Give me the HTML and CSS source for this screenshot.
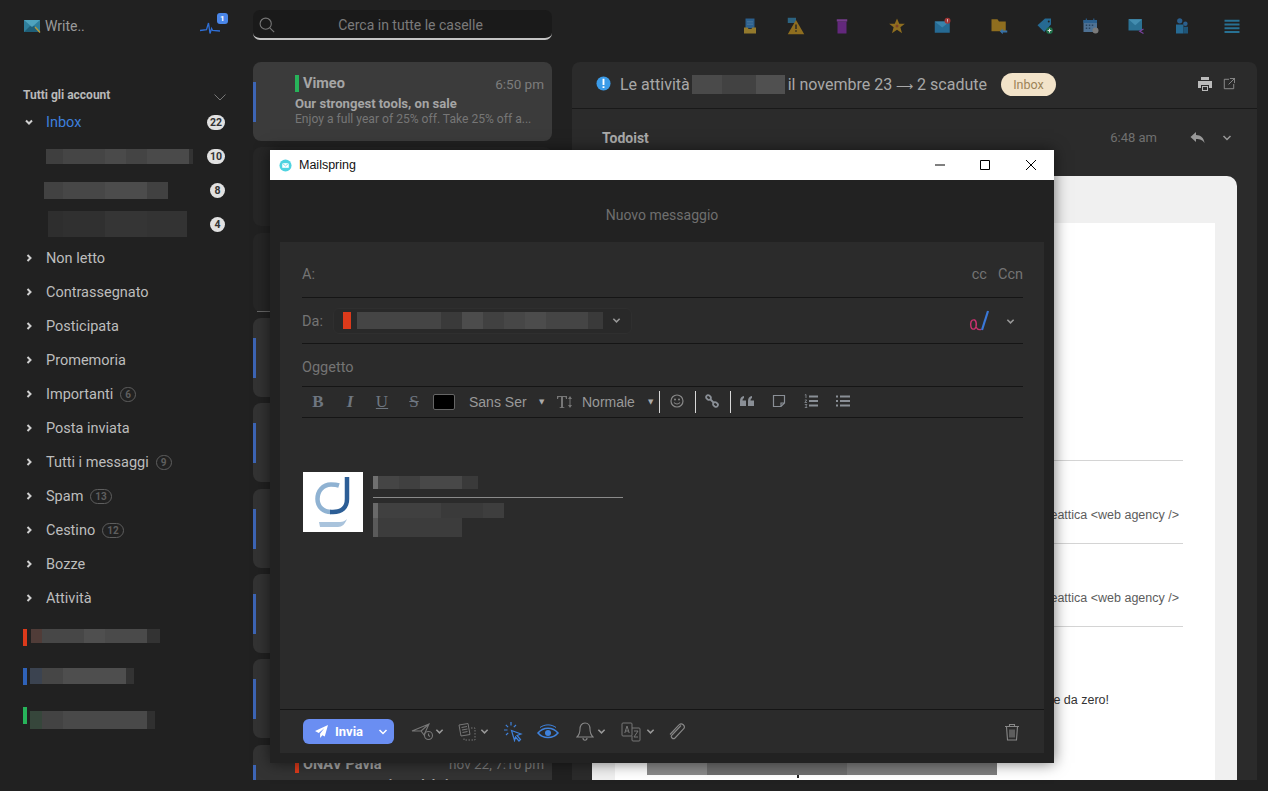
FILE: index.html
```html
<!DOCTYPE html>
<html lang="it">
<head>
<meta charset="utf-8">
<title>Mailspring</title>
<link rel="stylesheet" href="styles.css">
</head>
<body>
<div class="app">
  <aside class="sidebar">
    <div class="brand">
      <svg class="brand-ico" viewBox="0 0 17 14"><path fill="#2f7f9c" d="M0 1h16v12H0z"/><path fill="#4fa3bd" d="M0 1h16L8 8z"/><path fill="#1f5f78" d="M0 13l6-6 2 1 2-1 6 6z"/><path stroke="#b89a3a" stroke-width="1.4" d="M11 8l5 5.5"/></svg>
      <span class="brand-name">Write..</span>
      <span class="pulse">
        <svg viewBox="0 0 20 14" class="pulse-ico"><path fill="none" stroke="#2f6fd6" stroke-width="1.300" d="M0 8.500l6.500-.8L8.500 1l1.500 10.500 1.600-5 1 2L20 9"/></svg>
        <b class="pulse-badge">1</b>
      </span>
    </div>
    <div class="acc-head"><span>Tutti gli account</span><svg class="acc-chev" viewBox="0 0 12 7"><path fill="none" stroke="#777" d="M.5.5L6 6 11.5.5"/></svg></div>
    <ul class="nav">
      <li class="nav-item active"><svg class="chev" viewBox="0 0 10 10"><path d="M2 3.500l3 3 3-3"/></svg><span>Inbox</span><b class="count">22</b></li>
      <li class="nav-item sub"><i class="blur s1"></i><b class="count">10</b></li>
      <li class="nav-item sub"><i class="blur s2"></i><b class="count one">8</b></li>
      <li class="nav-item sub"><i class="blur s3"></i><b class="count one">4</b></li>
      <li class="nav-item"><svg class="chev" viewBox="0 0 10 10"><path d="M3.500 2l3 3-3 3"/></svg><span>Non letto</span></li>
      <li class="nav-item"><svg class="chev" viewBox="0 0 10 10"><path d="M3.500 2l3 3-3 3"/></svg><span>Contrassegnato</span></li>
      <li class="nav-item"><svg class="chev" viewBox="0 0 10 10"><path d="M3.500 2l3 3-3 3"/></svg><span>Posticipata</span></li>
      <li class="nav-item"><svg class="chev" viewBox="0 0 10 10"><path d="M3.500 2l3 3-3 3"/></svg><span>Promemoria</span></li>
      <li class="nav-item"><svg class="chev" viewBox="0 0 10 10"><path d="M3.500 2l3 3-3 3"/></svg><span>Importanti</span><em class="ghost">6</em></li>
      <li class="nav-item"><svg class="chev" viewBox="0 0 10 10"><path d="M3.500 2l3 3-3 3"/></svg><span>Posta inviata</span></li>
      <li class="nav-item"><svg class="chev" viewBox="0 0 10 10"><path d="M3.500 2l3 3-3 3"/></svg><span>Tutti i messaggi</span><em class="ghost">9</em></li>
      <li class="nav-item"><svg class="chev" viewBox="0 0 10 10"><path d="M3.500 2l3 3-3 3"/></svg><span>Spam</span><em class="ghost">13</em></li>
      <li class="nav-item"><svg class="chev" viewBox="0 0 10 10"><path d="M3.500 2l3 3-3 3"/></svg><span>Cestino</span><em class="ghost">12</em></li>
      <li class="nav-item"><svg class="chev" viewBox="0 0 10 10"><path d="M3.500 2l3 3-3 3"/></svg><span>Bozze</span></li>
      <li class="nav-item"><svg class="chev" viewBox="0 0 10 10"><path d="M3.500 2l3 3-3 3"/></svg><span>Attività</span></li>
    </ul>
    <div class="accounts">
      <div class="acct"><i class="mark red"></i><i class="blur a1"></i></div>
      <div class="acct"><i class="mark blue"></i><i class="blur a2"></i></div>
      <div class="acct"><i class="mark green"></i><i class="blur a3"></i></div>
    </div>
  </aside>

  <section class="list">
    <div class="search">
      <svg class="search-ico" viewBox="0 0 16 16"><circle cx="6.700" cy="6.700" r="5.600" fill="none" stroke="#777" stroke-width="1.100"/><path stroke="#777" stroke-width="1.100" d="M10.800 10.800l4.400 4.400"/></svg>
      <span>Cerca in tutte le caselle</span>
    </div>
    <div class="cards">
      <article class="card first">
        <div class="card-top"><i class="mark green"></i><b>Vimeo</b><time>6:50 pm</time></div>
        <div class="card-subj">Our strongest tools, on sale</div>
        <div class="card-snip">Enjoy a full year of 25% off. Take 25% off a...</div>
      </article>
      <article class="card plain"></article>
      <article class="card plain ruled"></article>
      <article class="card"></article>
      <article class="card"></article>
      <article class="card"></article>
      <article class="card"></article>
      <article class="card"></article>
      <article class="card tail">
        <div class="card-top"><i class="mark red"></i><b>ONAV Pavia</b><time>nov 22, 7:10 pm</time></div>
        <div class="card-subj">ONAV Degustazione del vino</div>
      </article>
    </div>
  </section>

  <section class="reader">
    <header class="thread-head">
      <svg class="alert" viewBox="0 0 16 16"><circle cx="8" cy="8" r="7.500" fill="#3b9be8"/><path fill="#fff" d="M7 3h2v6.500H7zM7 10.800h2v2H7z"/></svg>
      <span class="thread-a">Le attività</span><i class="blur t1"></i><span class="thread-b">il novembre 23 <span class="arrow">⟶</span> 2 scadute</span>
      <span class="pill">Inbox</span>
      <svg class="print" viewBox="0 0 16 16"><path fill="#bbb" d="M4 1h8v3H4zM1 5h14v7h-3V9H4v3H1zM5 10h6v5H5z"/><path fill="#2c2c2c" d="M6 11h4v3H6z"/></svg>
      <svg class="popout" viewBox="0 0 14 14"><path fill="none" stroke="#999" d="M7 1.500H1.500v11h11V7M8 .5h5.500V6M13.500.5L6.500 7.500"/></svg>
    </header>
    <div class="msg-head">
      <b>Todoist</b><time>6:48 am</time>
      <svg class="reply" viewBox="0 0 15 13"><path fill="#999" d="M6 1v3c5 0 8 3 8.500 8-2-3-4-4-8.500-4v3L.5 6z"/></svg>
      <svg class="msg-chev" viewBox="0 0 10 10"><path d="M1.500 3l3.500 3.500L8.500 3"/></svg>
    </div>
    <div class="mail">
      <div class="mail-inner">
        <div class="mail-row first-row"></div>
        <div class="mail-row">Creattica &lt;web agency /&gt;</div>
        <div class="mail-row">Creattica &lt;web agency /&gt;</div>
        <p class="mail-p">Impara da solo e da zero!</p>
        <i class="blur m1"></i>
      </div>
    </div>
  </section>

  <section class="compose">
    <div class="titlebar">
      <svg class="ms-logo" viewBox="0 0 14 14"><circle cx="7" cy="7" r="6.500" fill="#4fd3e0"/><path fill="#fff" d="M3.500 4.500h7v5h-7z"/><path fill="none" stroke="#4fd3e0" stroke-width=".8" d="M3.500 4.500L7 7.500l3.500-3"/></svg>
      <span class="ms-title">Mailspring</span>
      <svg class="win min" viewBox="0 0 10 10"><path d="M0 5h10"/></svg>
      <svg class="win max" viewBox="0 0 10 10"><path d="M.5.5h9v9h-9z"/></svg>
      <svg class="win cls" viewBox="0 0 10 10"><path d="M0 0l10 10M10 0L0 10"/></svg>
    </div>
    <div class="compose-title">Nuovo messaggio</div>
    <div class="sheet">
      <div class="field to"><span>A:</span><span class="cc">cc</span><span class="ccn">Ccn</span></div>
      <div class="field from">
        <span class="from-label">Da:</span>
        <div class="from-select"><i class="from-mark"></i><i class="blur f1"></i>
          <svg class="mini-chev" viewBox="0 0 10 10"><path d="M1.500 3l3.500 3.500L8.500 3"/></svg></div>
        <svg class="sig-ico" viewBox="0 0 22 24"><path fill="none" stroke="#c8326e" stroke-width="1.400" d="M6 11C2 10 1 14 2 18c.5 2.500 3 2.500 4 1.500l1-1.500c1 2 3 3 5 2.500M6 11c1.500 2 1.500 5 1 7"/><path stroke="#3a78d8" stroke-width="2.200" d="M13 21L19 2"/></svg>
        <svg class="mini-chev sig-chev" viewBox="0 0 10 10"><path d="M1.500 3l3.500 3.500L8.500 3"/></svg>
      </div>
      <div class="field subject"><span>Oggetto</span></div>
      <div class="fmt">
        <span class="f-btn fb">B</span>
        <span class="f-btn fi">I</span>
        <span class="f-btn fu">U</span>
        <span class="f-btn fs">S</span>
        <i class="swatch"></i>
        <span class="f-sel s-font">Sans Ser</span><span class="tri t-font">▼</span>
        <svg class="tt" viewBox="0 0 16 14"><path fill="#777" d="M0 1h10v3H9L8.500 2H6v10l1.500.5V13h-5v-.5L4 12V2H1.500L1 4H0zM13 1l2 3h-1.500v6H15l-2 3-2-3h1.500V4H11z"/></svg>
        <span class="f-sel s-size">Normale</span><span class="tri t-size">▼</span>
        <i class="sep"></i>
        <svg class="ti smile" viewBox="0 0 14 14"><circle cx="7" cy="7" r="6" fill="none" stroke="#888" stroke-width="1.200"/><circle cx="5" cy="5.500" r="1" fill="#888"/><circle cx="9" cy="5.500" r="1" fill="#888"/><path fill="none" stroke="#888" stroke-width="1.100" d="M4 8.500c1.500 2 4.500 2 6 0"/></svg>
        <i class="sep"></i>
        <svg class="ti" viewBox="0 0 14 14"><g fill="none" stroke="#8a8f96" stroke-width="1.800"><rect x="1" y="1.500" width="5" height="4" rx="2" transform="rotate(35 3.500 3.500)"/><rect x="8" y="8.500" width="5" height="4" rx="2" transform="rotate(35 10.500 10.500)"/><path d="M5 5l4 4"/></g></svg>
        <i class="sep"></i>
        <svg class="ti" viewBox="0 0 14 14"><path fill="#8a8f96" d="M0 7c0-3 1.500-4.500 4-5v2C3 4.500 2.500 5.500 2.500 6.500H6V12H0zM8 7c0-3 1.500-4.500 4-5v2c-1 .5-1.500 1.500-1.500 2.500H14V12H8z"/></svg>
        <svg class="ti" viewBox="0 0 14 14"><path fill="none" stroke="#8a8f96" stroke-width="1.200" d="M1.500 1.500h11V9L9 12.500H1.500zM12.500 9H9v3.500"/></svg>
        <svg class="ti" viewBox="0 0 14 14"><path stroke="#8a8f96" stroke-width="1.800" d="M5 2.500h9M5 7h9M5 11.500h9"/><path stroke="#8a8f96" stroke-width=".8" fill="none" d="M.8 1L2 .5V4M.8 6h2L.8 8.500H3M.8 10.500H3L1.800 12 3 13.500H.8"/></svg>
        <svg class="ti" viewBox="0 0 14 14"><path stroke="#8a8f96" stroke-width="1.800" d="M4 2.500h10M4 7h10M4 11.500h10M0 2.500h2M0 7h2M0 11.500h2"/></svg>
      </div>
      <div class="body">
        <div class="signature">
          <svg class="sig-logo" viewBox="0 0 60 60"><rect width="60" height="60" fill="#fff"/><path fill="none" stroke="#8fb2d2" stroke-width="4.500" d="M36 13.500c-3-1-6-1-8-1C20 12.500 14.500 19 14.500 27c0 8 6 13 13.500 13"/><path fill="none" stroke="#2c5e96" stroke-width="4.500" d="M44 5v22c0 8-5 13-14 13h-3"/><path fill="#a9c3dc" d="M16 50h21c3 0 5-1 7-3-2 5-5 8-9 8H17z"/></svg>
          <div class="sig-text">
            <i class="blur g1"></i>
            <hr class="sig-line">
            <i class="blur g2"></i>
            <i class="blur g3"></i>
          </div>
        </div>
      </div>
      <footer class="actions">
        <button class="send"><svg class="plane" viewBox="0 0 14 14"><path fill="#fff" d="M14 0L0 6.500l4 2 6-5-4.500 6V14l2.500-3 2.500 1.500z"/></svg><span>Invia</span><svg class="send-chev" viewBox="0 0 10 10"><path d="M1.500 3l3.500 3.500L8.500 3"/></svg></button>
        <svg class="act a-later" viewBox="0 0 24 20"><g fill="none" stroke="#777" stroke-width="1.100"><path d="M1 9L18 2l-5 11-3-4zM10 9l8-7"/><circle cx="17.500" cy="13.500" r="4"/><path d="M17.500 11.500v2l1.500 1"/></g></svg>
        <svg class="mini-chev c1" viewBox="0 0 10 10"><path d="M1.500 3l3.500 3.500L8.500 3"/></svg>
        <svg class="act a-tmpl" viewBox="0 0 20 20"><g fill="none" stroke="#777" stroke-width="1"><path d="M2 3l9-1.500 2 11-9 1.500zM4.500 5.500l5.500-1M5 8l5.500-1M5.500 10.500l5-1"/><path stroke-dasharray="1.500 1.500" d="M14 6h4v12H7v-2"/></g></svg>
        <svg class="mini-chev c2" viewBox="0 0 10 10"><path d="M1.500 3l3.500 3.500L8.500 3"/></svg>
        <svg class="act a-click" viewBox="0 0 20 20"><g stroke="#3f82dc" fill="none" stroke-width="1.200"><path d="M8 0v3.500M1 8h3.500M2.800 2.800l2.300 2.300M13 3l-2.200 2.200M3 13l2.200-2.200"/><path d="M8.500 8.500l9.500 3.500-4 1.500 3.500 4-1.500 1.500-3.500-4-1 3.500z"/></g></svg>
        <svg class="act a-eye" viewBox="0 0 22 16"><g fill="none" stroke="#3f82dc"><path stroke-width="1.500" d="M1 9c5-6.500 15-6.500 20 0-5 6-15 6-20 0z"/><path stroke-width="1" d="M3 3.500c5-3.500 11-3.500 16 0"/><circle cx="11" cy="9" r="3" fill="#3f82dc" stroke="none"/></g></svg>
        <svg class="act a-bell" viewBox="0 0 18 20"><path fill="none" stroke="#888" stroke-width="1.100" d="M9 1c-3.500 0-5 3-5 6 0 4-1 6-3 8h16c-2-2-3-4-3-8 0-3-1.500-6-5-6zM7 16c0 3 4 3 4 0"/></svg>
        <svg class="mini-chev c3" viewBox="0 0 10 10"><path d="M1.500 3l3.500 3.500L8.500 3"/></svg>
        <svg class="act a-trans" viewBox="0 0 20 20"><g fill="none" stroke="#777" stroke-width="1"><rect x="1" y="1" width="10" height="13" rx="1"/><path d="M11 6h7a1 1 0 0 1 1 1v11a1 1 0 0 1-1 1h-6a1 1 0 0 1-1-1v-4M3.800 11L6 4l2.200 7M4.500 9h3M13 9h4l-4 6h4"/></g></svg>
        <svg class="mini-chev c4" viewBox="0 0 10 10"><path d="M1.500 3l3.500 3.500L8.500 3"/></svg>
        <svg class="act a-clip" viewBox="0 0 18 18"><path fill="none" stroke="#888" stroke-width="1.100" d="M13 2.500L4 12a2 2 0 0 0 3 3l8.500-9a3 3 0 0 0-4.500-4L2 11.500"/></svg>
        <svg class="act a-trash" viewBox="0 0 16 18"><path fill="none" stroke="#888" stroke-width="1.100" d="M1 3.500h14M5.500 3.500V1.500h5v2M2.500 3.500l1 13.500h9l1-13.500M6 6.500v8M8 6.500v8M10 6.500v8"/></svg>
      </footer>
    </div>
  </section>

  <nav class="tools">
    <svg class="tool" viewBox="0 0 24 24"><path fill="#2d6aa0" d="M6 2h12v13H6z"/><path fill="#5f8fb5" d="M8 6h8v1H8zM8 9h8v1H8z"/><path fill="#a8892e" d="M4 14h5l1 2h4l1-2h5v8H4z"/></svg>
    <svg class="tool" viewBox="0 0 24 24"><path fill="#2f6f92" d="M1 1h11v7H1z"/><path fill="#a37c1f" d="M12 4l11 19H1z"/><path fill="#2a2a2a" d="M11 10h2v6h-2zM11 17.500h2v2h-2z"/></svg>
    <svg class="tool" viewBox="0 0 24 24"><path fill="#6f2a8c" d="M6 6h12v16H6z"/><path fill="#85409f" d="M5 3h14v3H5z"/></svg>
    <svg class="tool" viewBox="0 0 24 24"><path fill="#a37c1f" d="M12 2l3 7h7.500l-6 4.800 2.200 7.700L12 17l-6.700 4.500 2.200-7.700-6-4.800H9z"/><circle cx="12" cy="12" r="2" fill="#8c4a2a"/></svg>
    <svg class="tool" viewBox="0 0 24 24"><path fill="#2777a8" d="M1 6h20v15H1z"/><path fill="#3f95c4" d="M1 6l10 8 10-8z"/><circle cx="18" cy="5" r="4" fill="#b83a3a"/><path fill="#fff" d="M17.500 2.500h1v3h-1zM17.500 6h1v1h-1z"/></svg>
    <svg class="tool" viewBox="0 0 24 24"><path fill="#a37c1f" d="M2 3h8l2 3h9v13H2z"/><path fill="#3b80c0" d="M13 19l4-3.500V18h6v2.500h-6V23z"/></svg>
    <svg class="tool" viewBox="0 0 24 24"><path fill="#2777a8" d="M2 11L12 2h8v8L11 20z"/><circle cx="17" cy="6" r="1.300" fill="#222"/><circle cx="18" cy="18" r="4.500" fill="#1e7d4f"/><path fill="#fff" d="M17.300 15.500h1.400v5h-1.400zM15.500 17.300h5v1.400h-5z"/></svg>
    <svg class="tool" viewBox="0 0 24 24"><path fill="#5680a8" d="M2 4h18v16H2z"/><path fill="#2d6aa0" d="M2 4h18v4H2z"/><path fill="#2d6aa0" d="M5 2h1.500v4H5zM15 2h1.500v4H15z"/><path fill="#2a4a68" d="M5 10h2v2H5zM9 10h2v2H9zM13 10h2v2h-2zM5 14h2v2H5zM9 14h2v2H9z"/><circle cx="18" cy="18" r="4" fill="#8a8a8a"/></svg>
    <svg class="tool" viewBox="0 0 24 24"><path fill="#2d7fa8" d="M2 3h18v15H2z"/><path fill="#4aa0c8" d="M2 3l9 8 9-8z"/><g fill="none" stroke="#8a48b4" stroke-width="1.600"><path d="M22 16l-5 3 5 3"/></g></svg>
    <svg class="tool" viewBox="0 0 24 24"><circle cx="9" cy="5" r="3.500" fill="#2d6aa0"/><circle cx="16.500" cy="9" r="3" fill="#2d6aa0"/><path fill="#2777a8" d="M4 10h10v12H4z"/><path fill="#1f5f88" d="M14 13h6v9h-6z"/></svg>
    <svg class="tool" viewBox="0 0 24 24"><path stroke="#2a7fa8" stroke-width="2.500" d="M2 5h20M2 10h20M2 15h20M2 20h20"/></svg>
  </nav>
</div>
</body>
</html>
```

FILE: styles.css
```css
* { box-sizing: border-box; }
html, body { margin: 0; height: 100%; overflow: hidden; }
body { background: #212121; font-family: Roboto, "Open Sans", sans-serif; color: #aaa; }
ul { list-style: none; margin: 0; padding: 0; }
i, em { font-style: normal; display: block; }

.app { position: relative; width: 1268px; height: 791px; display: grid; grid-template-columns: 253px 299px 20px 685px 11px; grid-template-rows: 62px 718px; background: #212121; }

/* blurred (pixelated) redactions */
.blur { display: block; flex: none; }
.s1 { width: 147px; height: 15px; background: linear-gradient(90deg, #3f3f3f 0 17px, #454545 17px 59px, #4a4a4a 59px 80px, #444 80px 101px, #4a4a4a 101px 143px, #333 143px); }
.s2 { width: 124px; height: 17px; margin-left: -2px; background: linear-gradient(90deg, #424242 0 19px, #474747 19px 61px, #4c4c4c 61px 103px, #414141 103px); }
.s3 { width: 139px; height: 26px; margin-left: 2px; background: linear-gradient(90deg, #2e2e2e 0 15px, #303030 15px 57px, #353535 57px 99px, #333 99px); }
.a1 { width: 129px; height: 14px; margin-left: 4px; background: linear-gradient(90deg, #503c38 0 11px, #474747 11px 53px, #4f4f4f 53px 74px, #4a4a4a 74px 116px, #333 116px); }
.a2 { width: 104px; height: 16px; margin-left: 3px; background: linear-gradient(90deg, #3b4350 0 12px, #464646 12px 33px, #4e4e4e 33px 96px, #333 96px); }
.a3 { width: 125px; height: 18px; margin: 4px 0 0 3px; background: linear-gradient(90deg, #36463b 0 12px, #434343 12px 33px, #494949 33px 117px, #303030 117px); }
.t1 { width: 93px; height: 19px; margin: 0 3px 0 2px; background: linear-gradient(90deg, #4a4a4a 0 30px, #424242 30px 64px, #505050 64px); }
.f1 { width: 246px; height: 17px; margin-left: 6px; background: linear-gradient(90deg, #454545 0 84px, #3a3a3a 84px 105px, #4c4c4c 105px 126px, #414141 126px 147px, #474747 147px 168px, #4c4c4c 168px 189px, #454545 189px 231px, #3a3a3a 231px); }
.g1 { width: 105px; height: 13px; background: linear-gradient(90deg, #707070 0 5px, #454545 5px 26px, #404040 26px 47px, #484848 47px 89px, #3a3a3a 89px); }
.g2 { width: 131px; height: 15px; background: linear-gradient(90deg, #6a6a6a 0 5px, #404040 5px 68px, #3a3a3a 68px 110px, #3e3e3e 110px); }
.g3 { width: 89px; height: 19px; background: linear-gradient(90deg, #5a5a5a 0 5px, #3c3c3c 5px 89px); }
.m1 { position: absolute; left: 32px; bottom: 5px; width: 350px; height: 12px; background: linear-gradient(90deg, #8a8a8a 0 60px, #6e6e6e 60px 200px, #7e7e7e 200px); }
.m1::after { content: ""; position: absolute; left: 150px; top: 12px; width: 2px; height: 3px; background: #222; }

/* sidebar */
.sidebar { grid-row: 1 / 3; padding-top: 14px; display: flex; flex-direction: column; color: #bdbdbd; }
.brand { display: flex; align-items: center; height: 24px; padding-left: 24px; }
.brand-ico { width: 17px; height: 14px; }
.brand-name { margin-left: 4px; font-size: 14px; color: #9a9a9a; }
.pulse { position: relative; margin-left: 115px; top: 3px; width: 20px; height: 14px; display: block; }
.pulse-ico { width: 20px; height: 14px; display: block; }
.pulse-badge { position: absolute; left: 17px; top: -9px; width: 11px; height: 11px; border-radius: 3px; background: #4a86e8; color: #fff; font-size: 8px; line-height: 11px; text-align: center; }
.acc-head { display: flex; align-items: center; justify-content: space-between; height: 16px; margin: 49px 27px 0 23px; font-size: 12px; font-weight: 700; color: #b9b9b9; }
.acc-chev { width: 12px; height: 7px; margin-top: 4px; }
.nav { margin-top: 2px; }
.nav-item { position: relative; display: flex; align-items: center; height: 34px; padding-left: 46px; font-size: 14.500px; padding-right: 28px; }
.nav-item .chev { position: absolute; left: 24px; top: 12px; width: 10px; height: 10px; fill: none; stroke: #d0d0d0; stroke-width: 2; }
.nav-item.active { color: #3d7fdc; }
.count { margin-left: auto; min-width: 18px; height: 15px; padding: 0 3px; border-radius: 8px; background: #e1e1e1; color: #333; font-size: 10.500px; line-height: 15px; text-align: center; }
.count.one { min-width: 15px; }
.ghost { margin-left: 7px; min-width: 15px; height: 15px; padding: 0 4px; border: 1px solid #5e5e5e; border-radius: 8px; font-size: 10px; line-height: 13px; text-align: center; color: #5e5e5e; font-weight: 700; }
.accounts { margin-top: 14px; padding-left: 23px; display: flex; flex-direction: column; gap: 22px; }
.acct { display: flex; height: 17px; }
.mark { display: block; flex: none; width: 4px; height: 17px; }
.mark.red { background: #dc3a1b; }
.mark.blue { background: #2f62b8; }
.mark.green { background: #27b35a; }

/* list */
.list { grid-row: 1 / 3; display: grid; grid-template-rows: 62px 718px; }
.search { position: relative; height: 30px; margin-top: 10px; padding-left: 16px; background: #1a1a1a; border-radius: 7px; border-bottom: 2px solid #c4c4c4; font-size: 14px; color: #7a7a7a; text-align: center; line-height: 31px; }
.search-ico { position: absolute; left: 6px; top: 7px; width: 16px; height: 16px; }
.cards { display: flex; flex-direction: column; gap: 6.330px; overflow: hidden; }
.card { position: relative; flex: none; height: 79px; border-radius: 8px; background: #333; padding: 13px 8px 0 42px; }
.card::before { content: ""; position: absolute; left: 0; top: 20px; width: 3px; height: 40px; background: #3d65b5; }
.card.first { background: #3b3b3b; }
.card.plain { background: #262626; }
.card.plain::before { display: none; }
.card.ruled::after { content: ""; position: absolute; left: 4px; right: 275px; bottom: 0; height: 1px; background: #666; }
.card.tail { padding-top: 11px; }
.card-top { display: flex; align-items: center; height: 17px; font-size: 14.500px; color: #a5a5a5; }
.card-top .mark { margin-right: 4px; height: 17px; }
.card-top b { font-weight: 700; }
.card-top time { margin-left: auto; color: #7d7d7d; font-size: 13.500px; }
.card-subj { margin-top: 4px; font-size: 13.100px; font-weight: 700; color: #a5a5a5; line-height: 15px; white-space: nowrap; }
.card-snip { font-size: 12.100px; color: #767676; line-height: 16px; white-space: nowrap; }

/* reader */
.reader { grid-column: 4; grid-row: 2; display: flex; flex-direction: column; background: #2b2b2b; border-radius: 8px 8px 0 0; overflow: hidden; }
.thread-head { display: flex; align-items: center; height: 47px; padding: 0 0 2px 24px; border-bottom: 1px solid #191919; font-size: 16px; color: #a8a8a8; flex: none; }
.alert { width: 15px; height: 15px; margin-right: 9px; margin-top: -1px; }
.arrow { font-size: 11.500px; }
.pill { margin-left: 14px; width: 55px; height: 23px; border-radius: 12px; background: #f2e3c9; color: #9c8358; font-size: 12.500px; line-height: 23px; text-align: center; }
.print { width: 16px; height: 16px; margin-left: auto; }
.popout { width: 12px; height: 12px; margin: 0 22px 0 10px; }
.msg-head { display: flex; align-items: center; height: 67px; padding: 0 25px 10px 30px; flex: none; font-size: 14px; }
.msg-head b { color: #aaa; }
.msg-head time { margin-left: auto; color: #707070; font-size: 13px; }
.reply { width: 15px; height: 13px; margin-left: 33px; }
.msg-chev { width: 10px; height: 10px; margin-left: 17px; fill: none; stroke: #999; stroke-width: 1.500; }
.mail { flex: 1; margin: 0 20px; padding: 47px 22px 0 23px; background: #f0f0f0; border-radius: 10px 10px 0 0; min-height: 0; }
.mail-inner { position: relative; height: 100%; background: #fff; padding: 0 32px; font-family: "Liberation Sans", sans-serif; font-size: 12.500px; color: #5c5c5c; overflow: hidden; }
.mail-row { height: 83px; border-bottom: 1px solid #d4d4d4; padding: 47px 4px 0 0; line-height: 14px; text-align: right; }
.first-row { height: 238px; padding: 0; }
.mail-p { margin: 66px 74px 0 0; line-height: 14px; text-align: right; color: #333; }

/* compose window */
.compose { position: absolute; left: 270px; top: 150px; width: 784px; height: 613px; background: #222; box-shadow: 0 0 14px rgba(0,0,0,.55); display: flex; flex-direction: column; }
.titlebar { position: relative; display: flex; align-items: center; height: 30px; background: #fff; color: #111; font-family: "Liberation Sans", sans-serif; font-size: 12.500px; flex: none; }
.ms-logo { width: 13px; height: 13px; margin-left: 9px; }
.ms-title { margin-left: 7px; }
.win { width: 10px; height: 10px; fill: none; stroke: #000; stroke-width: 1; flex: none; }
.win.min { margin-left: auto; }
.win.max { margin-left: 35px; }
.win.cls { margin: 0 18px 0 36px; }
.compose-title { height: 62px; text-align: center; line-height: 70px; font-size: 14px; color: #6f6f6f; flex: none; }
.sheet { flex: 1; margin: 0 10px 10px; background: #2b2b2b; display: flex; flex-direction: column; min-height: 0; }
.field { display: flex; align-items: center; margin: 0 21px 0 22px; border-bottom: 1px solid #151515; font-size: 14.500px; color: #747474; flex: none; }
.to { height: 56px; padding-top: 9px; }
.cc { margin-left: auto; }
.ccn { margin-left: 11px; }
.from { height: 46px; }
.from-label { margin-top: 2px; }
.from-select { display: flex; align-items: center; width: 299px; height: 26px; margin-left: 10px; padding-left: 9px; border-radius: 6px; background: #292929; border: 1px solid #2f2f2f; }
.from-mark { width: 8px; height: 17px; background: #dc3a1b; flex: none; }
.mini-chev { width: 9px; height: 9px; fill: none; stroke: #999; stroke-width: 1.700; flex: none; }
.from-select .mini-chev { margin-left: 9px; }
.sig-ico { width: 22px; height: 24px; margin-left: auto; }
.sig-chev { margin: 2px 8px 0 15px; }
.subject { height: 43px; padding-top: 4px; }
.fmt { position: relative; display: flex; align-items: center; height: 31px; margin: 0 21px 0 22px; border-bottom: 1px solid #151515; flex: none; color: #8a8f96; }
.f-btn { width: 32px; text-align: center; font-family: "Liberation Serif", serif; font-size: 17px; color: #6e7680; flex: none; margin-top: -1px; }
.fb, .fi { font-weight: 700; }
.fi { font-style: italic; }
.fu { text-decoration: underline; }
.fs { text-decoration: line-through; }
.swatch { width: 22px; height: 16px; margin-left: 3px; background: #000; border: 1px solid #666; border-radius: 2px; flex: none; }
.f-sel { font-family: "Liberation Sans", sans-serif; font-size: 14px; color: #999; flex: none; }
.s-font { margin-left: 14px; width: 70px; }
.tri { font-family: "DejaVu Sans", sans-serif; font-size: 7px; color: #aaa; flex: none; }
.t-font { width: 8px; }
.tt { width: 16px; height: 14px; margin-left: 10px; flex: none; }
.s-size { margin-left: 9px; width: 66px; }
.t-size { width: 9px; }
.sep { width: 1px; height: 22px; background: #d8d8d8; flex: none; margin-left: 2px; }
.ti { width: 14px; height: 14px; flex: none; margin: -2px 0 0 18px; }
.sep + .ti { margin-left: 9px; }
.sep + .smile { margin-left: 10px; }
.ti + .sep { margin-left: 11px; }
.body { flex: 1; min-height: 0; padding: 54px 0 0 23px; }
.signature { display: flex; }
.sig-logo { width: 60px; height: 60px; flex: none; }
.sig-text { margin: 4px 0 0 10px; width: 250px; }
.sig-line { margin: 8px 0 5px; border: 0; border-top: 1px solid #8a8a8a; height: 0; width: 250px; }
.actions { position: relative; display: flex; align-items: center; height: 44px; border-top: 1px solid #151515; padding-left: 23px; flex: none; }
.send { display: flex; align-items: center; width: 91px; height: 25px; padding: 0 0 0 12px; border: 0; border-radius: 6px; background: #6a8ef2; color: #fff; font-family: Roboto, sans-serif; font-size: 13px; font-weight: 700; flex: none; }
.plane { width: 13px; height: 13px; }
.send span { margin-left: 7px; }
.send-chev { width: 10px; height: 10px; margin-left: 15px; fill: none; stroke: #fff; stroke-width: 1.500; }
.act { flex: none; }
.a-later { width: 24px; height: 20px; margin-left: 17px; }
.a-tmpl { width: 20px; height: 20px; margin-left: 13px; }
.c2 { margin-left: 3px; }
.a-click { width: 20px; height: 20px; margin-left: 14px; }
.a-eye { width: 22px; height: 16px; margin-left: 14px; }
.a-bell { width: 18px; height: 20px; margin-left: 17px; }
.c3 { margin-left: 3px; }
.a-trans { width: 20px; height: 20px; margin-left: 15px; }
.c4 { margin-left: 5px; }
.a-clip { width: 18px; height: 18px; margin-left: 13px; }
.a-trash { width: 16px; height: 18px; margin-left: auto; margin-right: 24px; }

/* top toolbar */
.tools { position: absolute; left: 741px; top: 17px; display: flex; gap: 27.800px; }
.tool { width: 18px; height: 18px; opacity: .85; flex: none; }
.tool:nth-child(4), .tool:nth-child(6) { margin-left: 10px; }
.tool:last-child { margin-left: 4px; }
```
